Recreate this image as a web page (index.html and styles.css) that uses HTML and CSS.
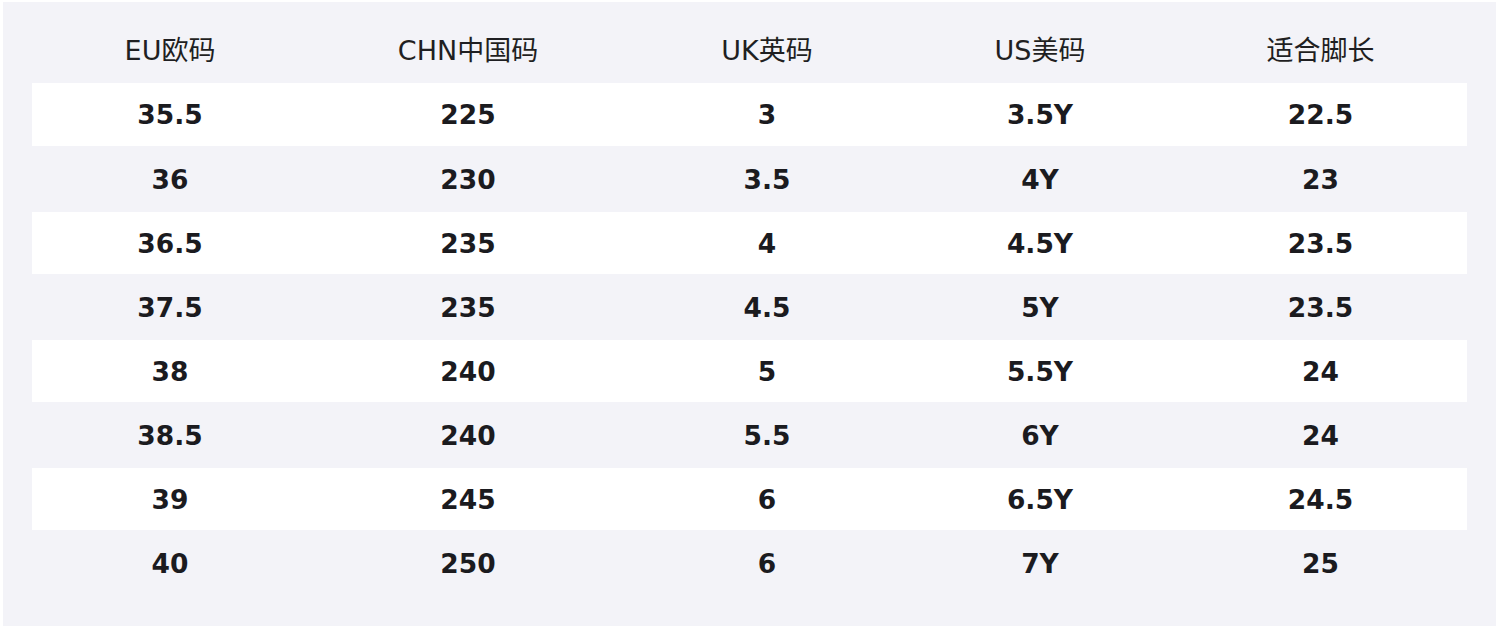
FILE: index.html
```html
<!DOCTYPE html>
<html lang="zh">
<head>
<meta charset="utf-8">
<link rel="stylesheet" href="styles.css">
</head>
<body>
<div class="panel">
  <table class="size-table">
    <colgroup>
      <col class="c1"><col class="c2"><col class="c3"><col class="c4"><col class="c5">
    </colgroup>
    <thead>
      <tr><th>EU欧码</th><th>CHN中国码</th><th>UK英码</th><th>US美码</th><th>适合脚长</th></tr>
    </thead>
    <tbody>
      <tr><td>35.5</td><td>225</td><td>3</td><td>3.5Y</td><td>22.5</td></tr>
      <tr><td>36</td><td>230</td><td>3.5</td><td>4Y</td><td>23</td></tr>
      <tr><td>36.5</td><td>235</td><td>4</td><td>4.5Y</td><td>23.5</td></tr>
      <tr><td>37.5</td><td>235</td><td>4.5</td><td>5Y</td><td>23.5</td></tr>
      <tr><td>38</td><td>240</td><td>5</td><td>5.5Y</td><td>24</td></tr>
      <tr><td>38.5</td><td>240</td><td>5.5</td><td>6Y</td><td>24</td></tr>
      <tr><td>39</td><td>245</td><td>6</td><td>6.5Y</td><td>24.5</td></tr>
      <tr><td>40</td><td>250</td><td>6</td><td>7Y</td><td>25</td></tr>
    </tbody>
  </table>
</div>
</body>
</html>
```
FILE: styles.css
```css
html, body {
  margin: 0;
  padding: 0;
  background: #ffffff;
}
body {
  padding: 2px 4px 3px 3px;
  font-family: "DejaVu Sans", "Noto Sans CJK SC", sans-serif;
  color: #1b1b1f;
}
.panel {
  background: #f3f3f8;
  padding: 20px 29px 31px 29px;
  height: 624px;
  box-sizing: border-box;
}
.size-table {
  width: 1435px;
  border-collapse: collapse;
  table-layout: fixed;
}
.c1 { width: 276px; }
.c2 { width: 320px; }
.c3 { width: 278px; }
.c4 { width: 268px; }
.c5 { width: 293px; }
.size-table th {
  font-weight: normal;
  font-size: 27px;
  height: 53px;
  padding: 0 0 8px 0;
  text-align: center;
  vertical-align: middle;
  color: #1f1f22;
}
.size-table td {
  font-weight: bold;
  font-size: 26.5px;
  height: 64px;
  padding: 0;
  text-align: center;
  vertical-align: middle;
  box-sizing: border-box;
}
.size-table tbody tr:nth-child(odd) td {
  background: #ffffff;
  background-clip: padding-box;
}
.size-table tbody tr {
  border-bottom: 2px solid transparent;
}
```
